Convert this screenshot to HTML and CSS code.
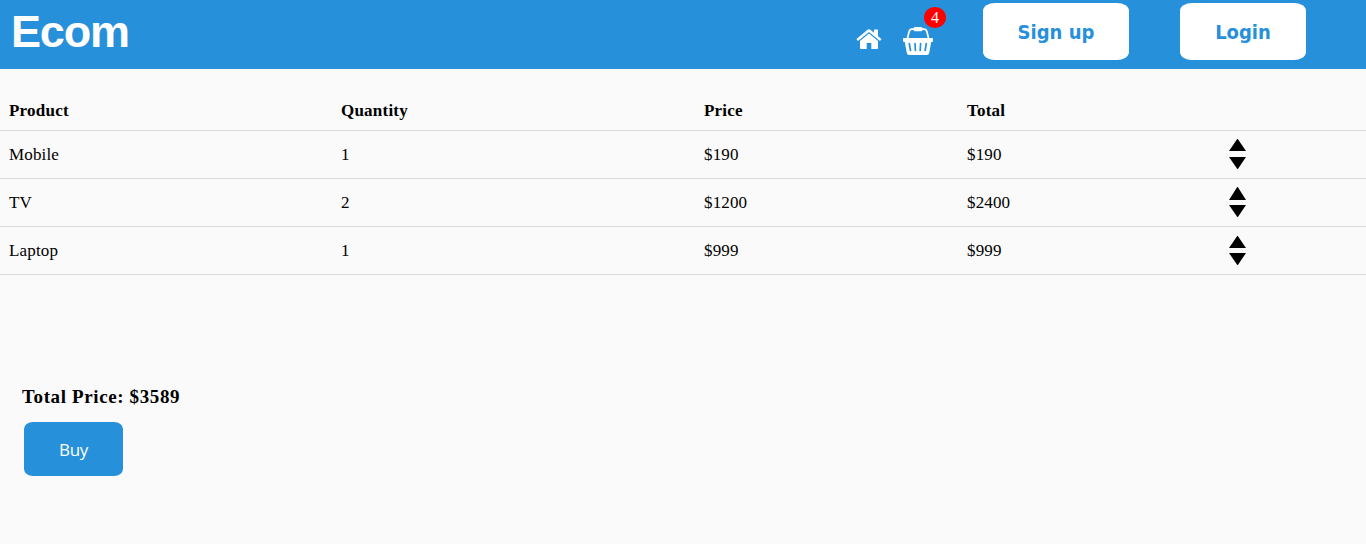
FILE: index.html
```html
<!DOCTYPE html>
<html lang="en">
<head>
<meta charset="utf-8">
<title>Ecom</title>
<link rel="stylesheet" href="styles.css">
</head>
<body>
<header class="navbar">
  <a class="brand">Ecom</a>
  <nav class="actions">
    <a class="home" aria-label="Home">
      <svg width="26" height="22" viewBox="0 0 26 22"><path fill="#fff" d="M4 12.900 13 5.500l9 7.400V20a1 1 0 0 1-1 1h-5.700v-6h-4.600v6H5a1 1 0 0 1-1-1zM.8 10.800 11.600 1.800a2.200 2.200 0 0 1 2.800 0L18 4.800V2.200q0-.6.6-.6h2.800q.6 0 .6.600v6l3.200 2.600q.4.300.1.700l-.9 1.100q-.4.400-.8.100L13 4 2.400 12.700q-.4.300-.8-.1L.7 11.500q-.3-.4.1-.7z"/></svg>
    </a>
    <a class="basket" aria-label="Basket">
      <svg width="32" height="29" viewBox="0 0 32 29">
        <path d="M5.300 13 7 6Q7.700 3.200 10 3.200h12q2.300 0 3 2.800l1.700 7" fill="none" stroke="#fff" stroke-width="1.700"/>
        <rect x="11.500" y="1" width="9" height="4.200" rx="1.500" fill="#fff"/>
        <path fill="#fff" d="M1.800 12h28.400q.8 0 .8.800v2q0 1.200-1.200 1.200h-.6L27.300 26.500Q27 29 24.800 29H7.200Q5 29 4.700 26.500L2.800 16h-.6Q1 16 1 14.800v-2q0-.8.8-.8z"/>
        <path d="M7.300 17.500l1.200 7M13 17.500l.4 7M18.600 17.500l-.4 7M24.300 17.500l-1.200 7" stroke="#2790da" stroke-width="1.700" stroke-linecap="round"/>
      </svg>
      <span class="badge">4</span>
    </a>
    <button class="signup">Sign up</button>
    <button class="login">Login</button>
  </nav>
</header>
<main>
  <table class="cart">
    <colgroup><col class="c-product"><col class="c-quantity"><col class="c-price"><col class="c-total"><col></colgroup>
    <thead>
      <tr><th>Product</th><th>Quantity</th><th>Price</th><th>Total</th><th></th></tr>
    </thead>
    <tbody>
      <tr><td>Mobile</td><td>1</td><td>$190</td><td>$190</td><td><svg class="stepper" width="17" height="31"><path d="M0 12 8.200 0h.6L17 12zM0 18h17L8.900 30h-.6z"/></svg></td></tr>
      <tr><td>TV</td><td>2</td><td>$1200</td><td>$2400</td><td><svg class="stepper" width="17" height="31"><path d="M0 13 8.200 0h.6L17 13zM0 18h17L8.900 30h-.6z"/></svg></td></tr>
      <tr><td>Laptop</td><td>1</td><td>$999</td><td>$999</td><td><svg class="stepper" width="17" height="31"><path d="M0 13 8.200 1h.6L17 13zM0 18h17L8.900 30h-.6z"/></svg></td></tr>
    </tbody>
  </table>
  <section class="summary">
    <h3>Total Price: $3589</h3>
    <button class="buy">Buy</button>
  </section>
</main>
</body>
</html>
```

FILE: styles.css
```css
* { box-sizing: border-box; }
body {
  margin: 0;
  background: #fafafa;
  color: #000;
  font-family: "Liberation Serif", "Times New Roman", serif;
  font-size: 17px;
}
.navbar {
  display: flex;
  justify-content: space-between;
  align-items: flex-start;
  height: 69px;
  padding: 3px 60px 0 11px;
  background: #2790da;
}
.brand {
  color: #fff;
  font: bold 45px/57px "Liberation Sans", Arial, sans-serif;
  letter-spacing: -1.2px;
}
.actions { display: flex; align-items: flex-start; }
.home { height: 22px; margin: 25px 20px 0 0; }
.basket { position: relative; height: 29px; margin: 23px 49px 0 0; }
.home svg, .basket svg { display: block; }
.basket svg { margin-top: 0; }
.badge {
  position: absolute;
  left: 22px;
  top: -19px;
  width: 22px;
  height: 21px;
  border-radius: 50%;
  background: #f00;
  color: #fff;
  font-size: 16px;
  line-height: 21px;
  text-align: center;
}
button { border: 0; padding: 0; }
.signup, .login {
  height: 57px;
  border-radius: 12px / 8px;
  background: #fff;
  color: #2790da;
  font: bold 20px "DejaVu Sans Condensed", "DejaVu Sans", Tahoma, sans-serif;
  font-stretch: condensed;
}
.signup { width: 146px; margin-right: 51px; }
.login { width: 126px; }
.cart {
  width: 100%;
  margin-top: 22px;
  border-collapse: separate;
  border-spacing: 0;
  table-layout: fixed;
}
.c-product { width: 332px; }
.c-quantity { width: 363px; }
.c-price { width: 263px; }
.c-total { width: 262px; }
.cart th, .cart td {
  height: 48px;
  padding: 0 0 0 9px;
  border-bottom: 1px solid #ddd;
  text-align: left;
  vertical-align: middle;
}
.cart th { height: 40px; letter-spacing: .22px; }
.cart td { letter-spacing: .15px; }
.stepper { display: block; }
.summary { padding: 110px 0 0 22px; }
.summary h3 {
  margin: 0;
  font-size: 19px;
  line-height: 24px;
  letter-spacing: .62px;
}
.buy {
  display: block;
  width: 99px;
  height: 54px;
  margin: 13px 0 0 2px;
  border-radius: 9px / 7px;
  background: #2790da;
  color: #fff;
  font: 17px "Open Sans", "Noto Sans", sans-serif;
  letter-spacing: -.3px;
}
```
